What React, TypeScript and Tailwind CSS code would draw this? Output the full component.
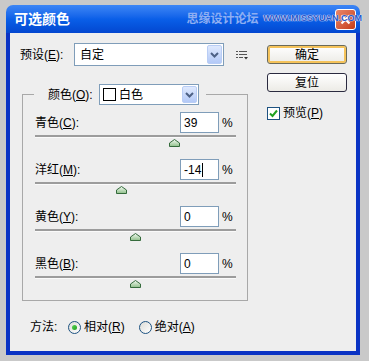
import React from "react";

const font = { fontFamily: '"Liberation Sans", "Noto Sans CJK SC", sans-serif' };

const DropArrow = () => (
  <div className="flex h-full w-[15px] items-center justify-center rounded-[2px] border border-[#b9cdf5] bg-gradient-to-b from-[#dfe9fd] to-[#b3c9f7]">
    <svg width="9" height="6" viewBox="0 0 9 6">
      <path d="M1 1 L4.5 4.5 L8 1" fill="none" stroke="#4d6185" strokeWidth="2" />
    </svg>
  </div>
);

const Thumb = ({ left }: { left: number }) => (
  <svg
    width="11"
    height="8"
    viewBox="0 0 11 8"
    className="absolute top-[4px]"
    style={{ left: left - 5.5 }}
  >
    <defs>
      <linearGradient id="tg" x1="0" y1="0" x2="0" y2="1">
        <stop offset="0" stopColor="#f4fbf2" />
        <stop offset="1" stopColor="#8fbf8a" />
      </linearGradient>
    </defs>
    <path d="M0.5 7.5 L0.5 4 L5.5 0.5 L10.5 4 L10.5 7.5 Z" fill="url(#tg)" stroke="#356b3c" strokeWidth="1" />
  </svg>
);

const rows = [
  { name: "青色", key: "C", value: "39", caret: false },
  { name: "洋红", key: "M", value: "-14", caret: true },
  { name: "黄色", key: "Y", value: "0", caret: false },
  { name: "黑色", key: "B", value: "0", caret: false },
];

const SliderRow = ({ name, k, value, caret }: { name: string; k: string; value: string; caret: boolean }) => {
  const frac = (Number(value) + 100) / 200;
  return (
    <div className="flex flex-col">
      <div className="flex h-[21px] items-center">
        <span className="flex-1 text-[12px] text-black">
          {name}(<u>{k}</u>):
        </span>
        <div className="flex h-[21px] w-[39px] items-center border border-[#7f9db9] bg-white pl-[3px] text-[12px] text-black">
          {value}
          {caret && <span className="ml-[1px] h-[14px] w-[1px] bg-black" />}
        </div>
        <span className="ml-[3px] w-[14px] text-[12px] text-black">%</span>
      </div>
      <div className="relative mt-[2px] h-[12px] w-[201px]">
        <div className="h-[2px] w-full bg-[#9c9c9c]" />
        <div className="h-[1px] w-full bg-[#fafafa]" />
        <Thumb left={frac * 201} />
      </div>
    </div>
  );
};

const Radio = ({ on }: { on: boolean }) => (
  <span className="flex h-[13px] w-[13px] items-center justify-center rounded-full border border-[#1d5281] bg-gradient-to-br from-[#dcdcd7] to-white">
    {on && <span className="h-[5px] w-[5px] rounded-full bg-gradient-to-br from-[#55d151] to-[#21a121]" />}
  </span>
);

export default function App() {
  return (
    <div className="h-[361px] w-[369px] bg-[#c9c9c9] pb-[6px] pl-[6px] pr-[9px] pt-[5px]" style={font}>
      <div className="flex h-full w-full flex-col">
        {/* title bar */}
        <div className="flex h-[28px] items-center rounded-t-[7px] bg-gradient-to-b from-[#3d86f5] via-[#0a5fe8] to-[#0447d0] pl-[8px] pr-[4px]">
          <span className="text-[14px] font-bold text-white">可选颜色</span>
          <span className="ml-auto text-[12px] font-bold text-[#8eaef2]">思缘设计论坛</span>
          <span className="relative z-10 ml-[5px] text-[9px] font-bold text-[#2856c8] [text-shadow:0_0_1px_#e6eeff,0_0_1px_#e6eeff,0_0_1px_#e6eeff]">
            WWW.MISSYUAN.COM
          </span>
          <div className="-ml-[27px] flex h-[21px] w-[21px] items-center justify-center rounded-[3px] border border-white bg-gradient-to-br from-[#e8866a] to-[#c53a12]">
            <svg width="11" height="11" viewBox="0 0 11 11">
              <path d="M1.5 1.5 L9.5 9.5 M9.5 1.5 L1.5 9.5" stroke="white" strokeWidth="2.2" />
            </svg>
          </div>
        </div>
        {/* body */}
        <div className="flex flex-1 border-x-[4px] border-b-[4px] border-[#0a33c4] bg-[#eeeeee] pl-[10px] pr-[9px] pt-[10px]">
          <div className="flex w-[228px] flex-col">
            <div className="flex h-[23px] items-center">
              <span className="w-[54px] text-[12px] text-black">
                预设(<u>E</u>):
              </span>
              <div className="flex h-[23px] w-[150px] items-center border border-[#7f9db9] bg-white py-[1px] pl-[5px] pr-[1px] text-[12px] text-black">
                <span className="flex-1">自定</span>
                <DropArrow />
              </div>
              <svg width="12" height="10" viewBox="0 0 12 10" className="ml-[12px]">
                <rect x="0" y="1" width="2" height="1" fill="#555" />
                <rect x="3" y="1" width="8" height="1" fill="#555" />
                <rect x="0" y="4" width="2" height="1" fill="#555" />
                <rect x="3" y="4" width="8" height="1" fill="#555" />
                <rect x="0" y="7" width="2" height="1" fill="#555" />
                <rect x="3" y="7" width="4" height="1" fill="#555" />
                <path d="M8 7 L12 7 L10 9.5 Z" fill="#333" />
              </svg>
            </div>
            <fieldset className="ml-[2px] mt-[18px] w-[226px] border border-[#a8a8a8] pb-[12px] pl-[12px] pr-[11px] pt-[7px]">
              <legend className="-ml-[1px] pl-[14px] pr-[7px]">
                <div className="flex items-center">
                  <span className="w-[51px] text-[12px] text-black">
                    颜色(<u>O</u>):
                  </span>
                  <div className="flex h-[21px] w-[100px] items-center border border-[#7f9db9] bg-white py-[1px] pl-[3px] pr-[1px] text-[12px] text-black">
                    <span className="mr-[3px] h-[13px] w-[13px] border border-black bg-white" />
                    <span className="flex-1">白色</span>
                    <DropArrow />
                  </div>
                </div>
              </legend>
              <div className="flex flex-col gap-[12px]">
                {rows.map((r) => (
                  <SliderRow key={r.key} name={r.name} k={r.key} value={r.value} caret={r.caret} />
                ))}
              </div>
            </fieldset>
            <div className="ml-[10px] mt-[19px] flex h-[14px] items-center text-[12px] text-black">
              <span className="w-[38px]">方法:</span>
              <Radio on />
              <span className="ml-[3px]">
                相对(<u>R</u>)
              </span>
              <span className="ml-[14px]">
                <Radio on={false} />
              </span>
              <span className="ml-[3px]">
                绝对(<u>A</u>)
              </span>
            </div>
          </div>
          <div className="ml-[19px] flex w-[80px] flex-col pt-[2px]">
            <button className="flex h-[19px] items-center justify-center rounded-[3px] border border-[#6a6a5a] bg-gradient-to-b from-white to-[#ecebe6] text-[12px] text-black shadow-[inset_0_0_0_2px_#f5c35b]">
              确定
            </button>
            <button className="mt-[9px] flex h-[19px] items-center justify-center rounded-[3px] border border-[#2a2a40] bg-gradient-to-b from-white to-[#ecebe6] text-[12px] text-black">
              复位
            </button>
            <div className="mt-[12px] flex items-center text-[12px] text-black">
              <span className="flex h-[13px] w-[13px] items-center justify-center border border-[#1d5281] bg-white">
                <svg width="9" height="9" viewBox="0 0 9 9">
                  <path d="M1 4.5 L3.5 7 L8 1.5" fill="none" stroke="#21a121" strokeWidth="2" />
                </svg>
              </span>
              <span className="ml-[3px]">
                预览(<u>P</u>)
              </span>
            </div>
          </div>
        </div>
      </div>
    </div>
  );
}
